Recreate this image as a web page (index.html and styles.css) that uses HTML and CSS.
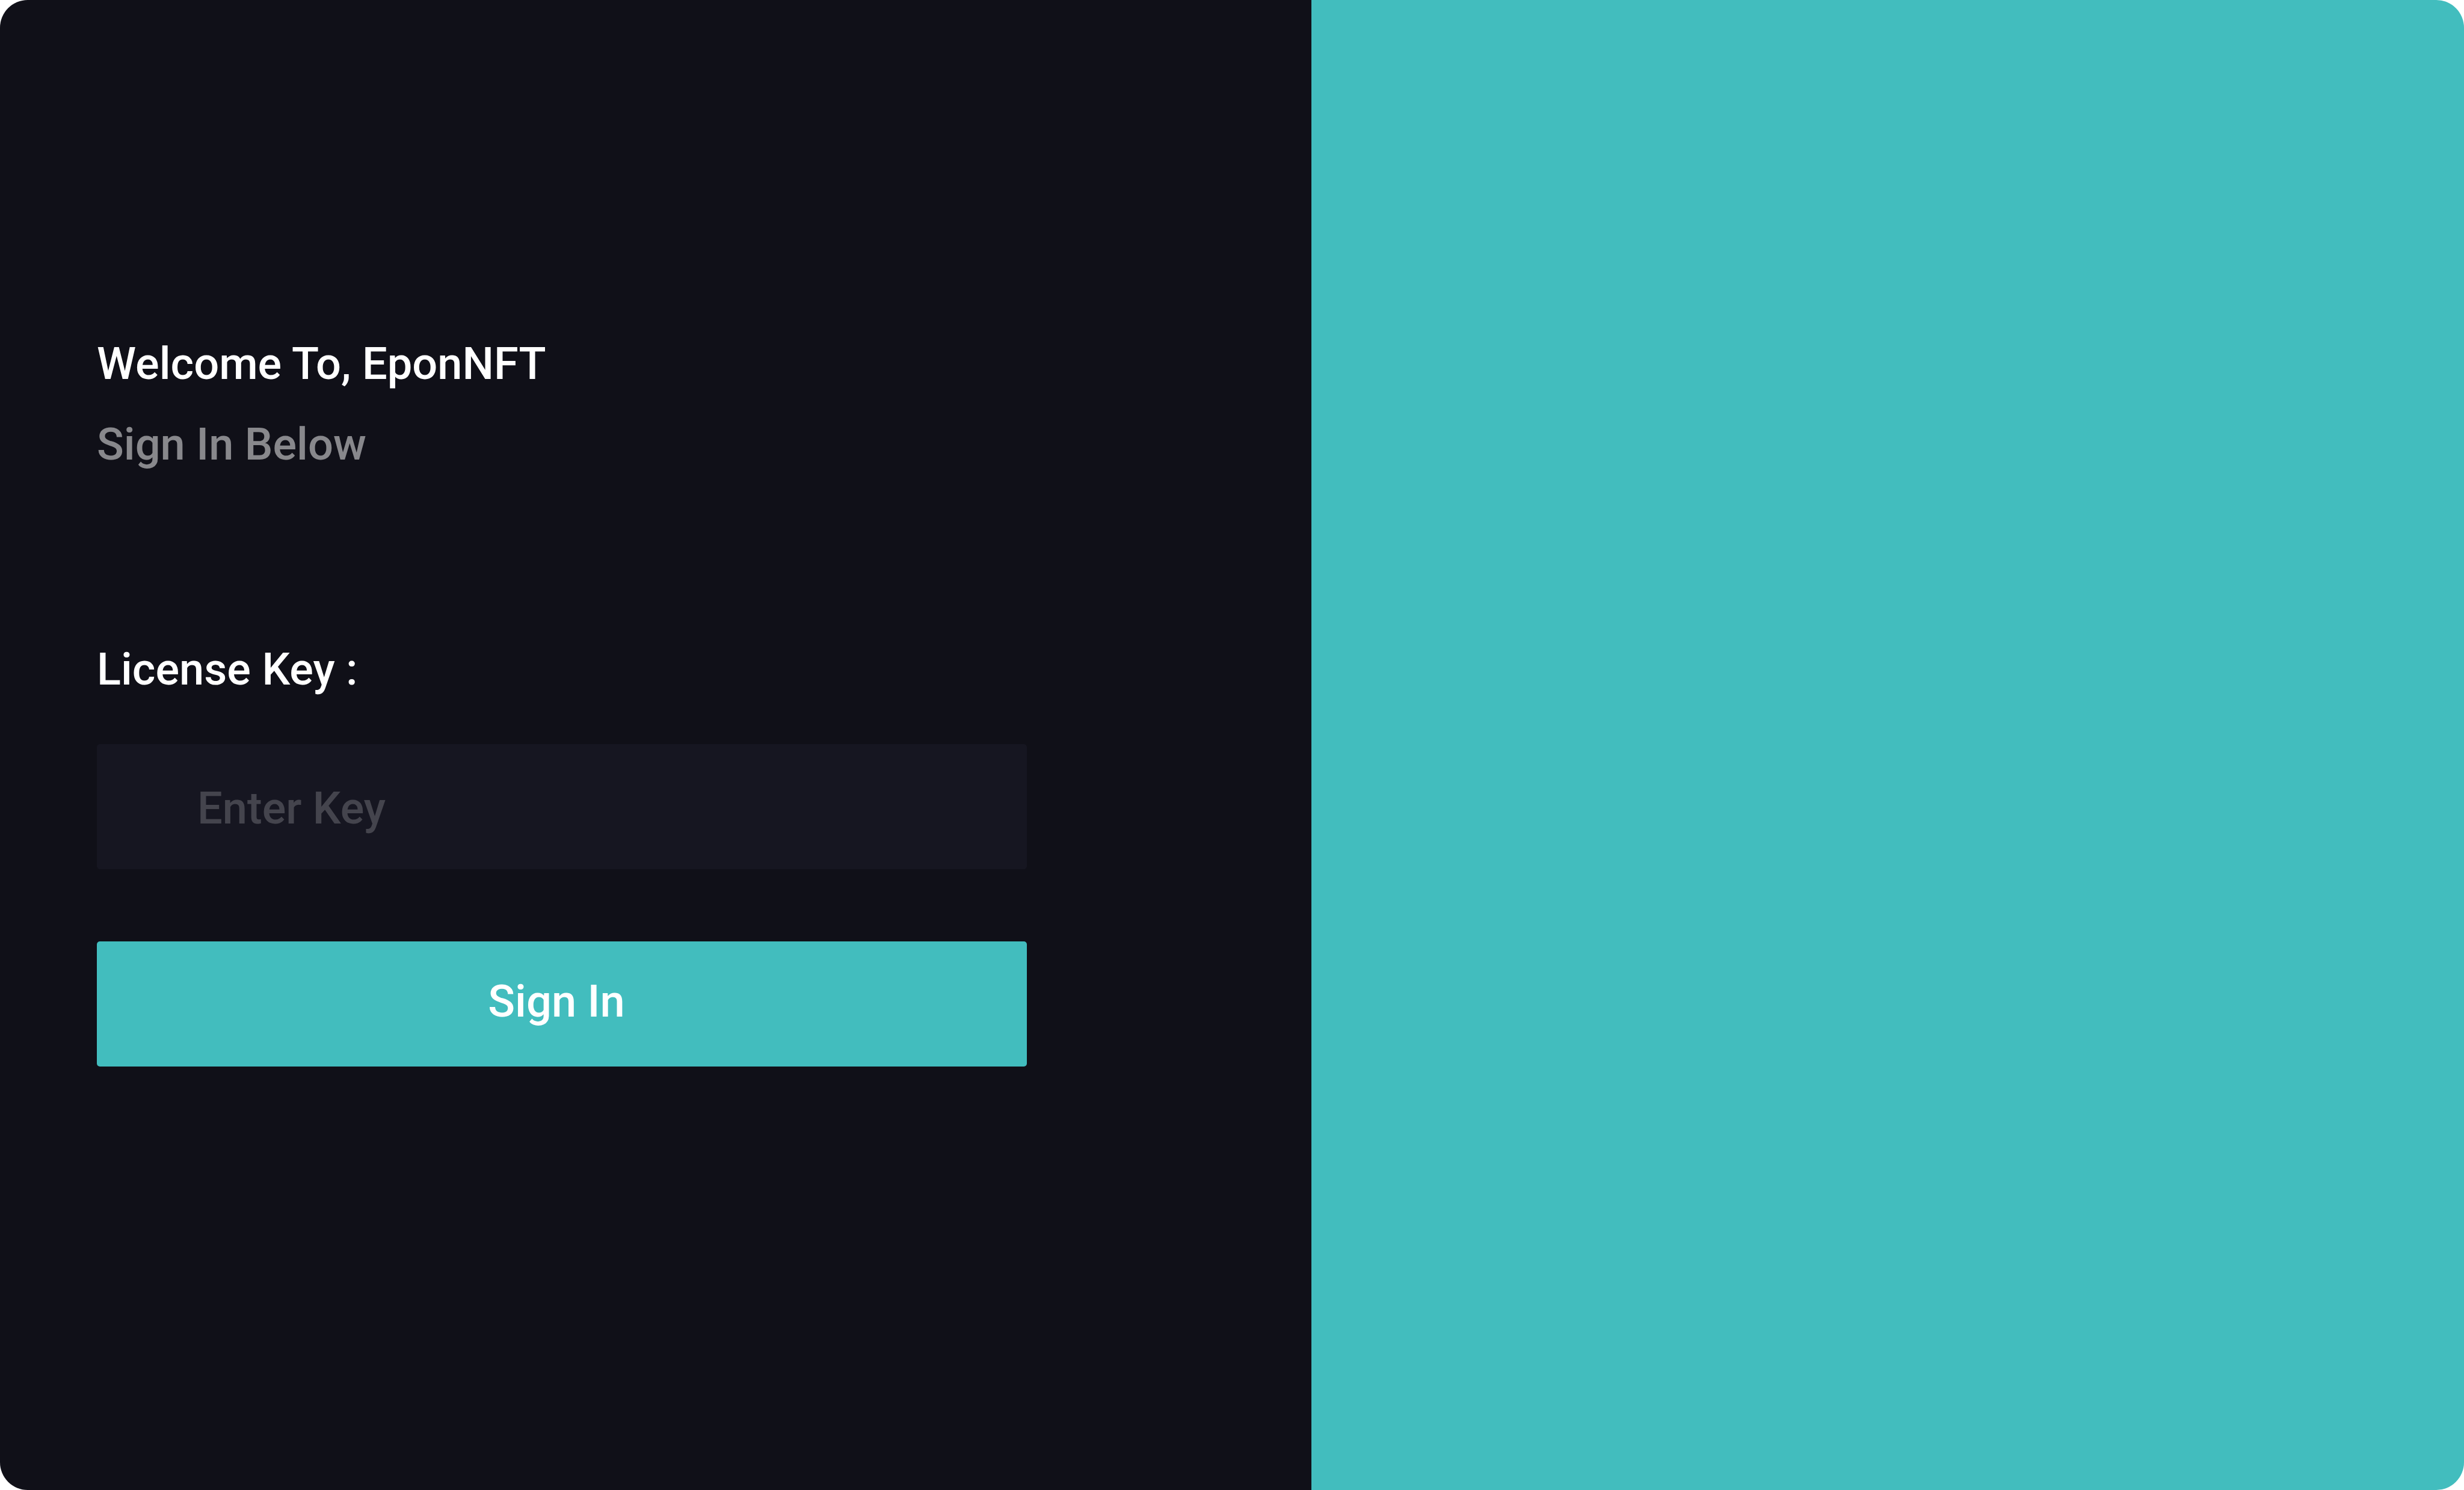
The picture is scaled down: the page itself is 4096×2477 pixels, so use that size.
FILE: index.html
```html
<!DOCTYPE html>
<html lang="en">
<head>
  <meta charset="utf-8">
  <title>EponNFT – Sign In</title>
  <link rel="stylesheet" href="styles.css">
</head>
<body>
  <main class="window">
    <section class="panel">
      <header class="intro">
        <h1 class="title">Welcome To, EponNFT</h1>
        <p class="subtitle">Sign In Below</p>
      </header>
      <form class="form">
        <label class="label" for="license-key">License Key :</label>
        <input class="field" id="license-key" type="text" placeholder="Enter Key">
        <button class="submit" type="button">Sign In</button>
      </form>
    </section>
    <aside class="banner"></aside>
  </main>
</body>
</html>
```

FILE: styles.css
```css
* {
  box-sizing: border-box;
}

body {
  margin: 0;
  background: #ffffff;
  color: #ffffff;
  font: 500 74px/88px Roboto, sans-serif;
}

.window {
  display: grid;
  grid-template-columns: 2180fr 1916fr;
  min-height: 100vh;
  border-radius: 46px;
  overflow: hidden;
}

.panel {
  display: flex;
  flex-direction: column;
  gap: 286px;
  padding: 561px 473px 80px 161px;
  background: #101018;
}

.intro {
  display: flex;
  flex-direction: column;
  gap: 46px;
}

.title,
.subtitle {
  margin: 0;
  font: inherit;
}

.subtitle {
  color: rgba(255, 255, 255, 0.5);
}

.form {
  display: flex;
  flex-direction: column;
}

.label {
  margin-bottom: 80px;
}

.field,
.submit {
  width: 100%;
  height: 208px;
  border: 0;
  border-radius: 5px;
  color: inherit;
  font: inherit;
}

.field {
  margin-bottom: 120px;
  padding: 4px 167px 0;
  background: #161621;
}

.field::placeholder {
  color: rgba(255, 255, 255, 0.2);
  opacity: 1;
}

.submit {
  padding: 0 18px 8px 0;
  background: #42bdbe;
  cursor: pointer;
}

.banner {
  background: #42bdbe;
}
```
